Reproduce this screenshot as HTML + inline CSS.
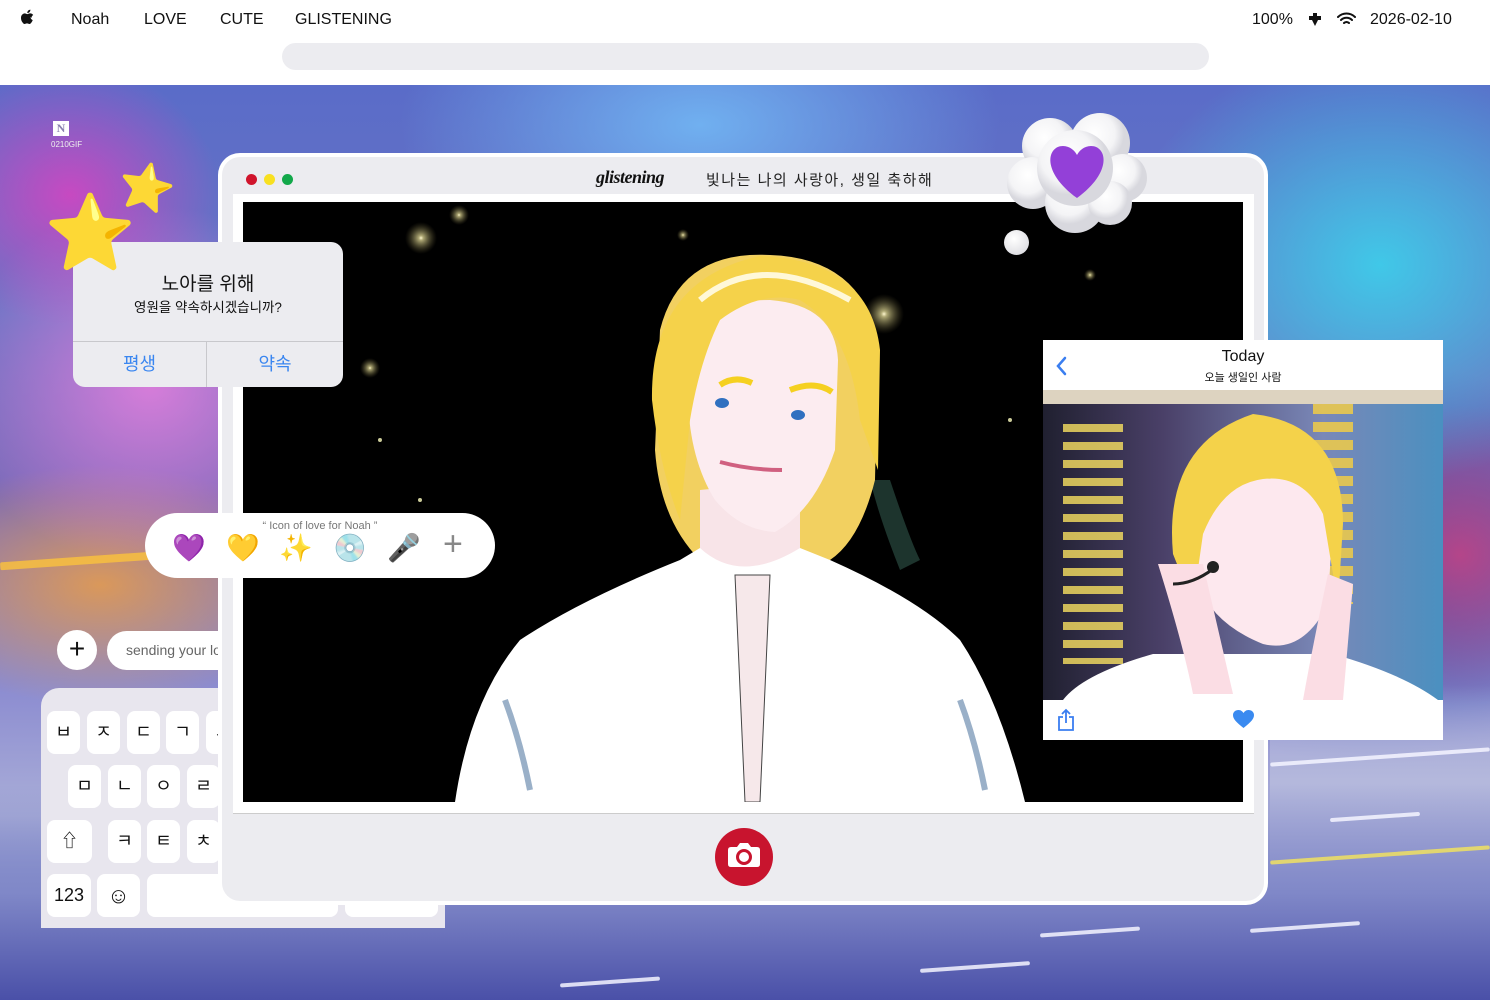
<!DOCTYPE html>
<html><head><meta charset="utf-8">
<style>
*{margin:0;padding:0;box-sizing:border-box}
body{width:1490px;height:1000px;overflow:hidden;position:relative;background:#fff;font-family:"Liberation Sans","Noto Sans CJK KR",sans-serif;color:#111}
.abs{position:absolute}
.menu{top:11px;font-size:16px;color:#111}
#bg{left:0;top:85px;width:1490px;height:915px;overflow:hidden;
background:
radial-gradient(ellipse 150px 130px at 70px 110px,rgba(224,64,192,.8) 0%,rgba(224,64,192,0) 100%),
radial-gradient(ellipse 200px 180px at 150px 300px,rgba(240,128,224,.8) 0%,rgba(240,128,224,0) 100%),
radial-gradient(ellipse 260px 220px at 1380px 180px,#40c8e8 0%,rgba(64,200,232,0) 100%),
radial-gradient(ellipse 300px 160px at 700px 40px,#70b0f0 0%,rgba(112,176,240,0) 100%),
radial-gradient(ellipse 160px 150px at 1460px 470px,rgba(208,64,128,.8) 0%,rgba(208,64,128,0) 100%),
radial-gradient(ellipse 220px 120px at 100px 500px,rgba(240,160,64,.8) 0%,rgba(240,160,64,0) 100%),
radial-gradient(ellipse 300px 200px at 1380px 480px,#3050a8 0%,rgba(48,80,168,0) 100%),
linear-gradient(180deg,#5a6cc8 0%,#6a74c4 25%,#7a6ab8 45%,#8a8ad0 65%,#aaaed8 80%,#6070c0 100%);}
.road{position:absolute;height:4px;background:#f4f4ff;border-radius:2px;transform:rotate(-4deg);opacity:.85}
#win{left:218px;top:153px;width:1050px;height:752px;background:#fff;border-radius:22px;padding:4px}
#wini{width:100%;height:100%;background:#ececf0;border-radius:18px;position:relative}
.dot{position:absolute;top:17px;width:11px;height:11px;border-radius:50%}
#dlg{left:73px;top:242px;width:270px;height:145px;background:#ececf0;border-radius:12px;overflow:hidden}
.key{position:absolute;background:#fff;border-radius:8px;height:43px;font-size:18px;text-align:center;line-height:43px;color:#111}
</style></head><body>

<div class="abs" style="left:20px;top:9px;font-size:18px"><svg width="14" height="17" viewBox="0 0 14 17"><path d="M11.5 9c0-2 1.6-2.9 1.7-3-1-1.4-2.4-1.6-2.9-1.6-1.2-.1-2.4.7-3 .7s-1.6-.7-2.6-.7C3.400 4.500 1 5.600 1 9c0 1.500.5 3 1.300 4.100.6.9 1.300 1.900 2.300 1.900s1.300-.6 2.400-.6 1.400.6 2.400.6 1.700-1 2.300-1.900c.7-1 1-2 1-2.100-.1 0-2.200-.8-2.200-3zM9.600 3c.5-.6.9-1.500.8-2.400-.8 0-1.700.5-2.300 1.100-.5.5-.9 1.400-.8 2.300.9.1 1.800-.4 2.300-1z" fill="#111"/></svg></div>
<div class="abs menu" style="left:71px">Noah</div>
<div class="abs menu" style="left:144px">LOVE</div>
<div class="abs menu" style="left:220px">CUTE</div>
<div class="abs menu" style="left:295px">GLISTENING</div>
<div class="abs menu" style="left:1252px">100%</div>
<div class="abs" style="left:1307px;top:12px"><svg width="16" height="15" viewBox="0 0 16 15"><path d="M6 1h4v3h4v4h-3l-3 6-3-6H2V4h4z" fill="#111"/></svg></div>
<div class="abs" style="left:1337px;top:12px"><svg width="19" height="14" viewBox="0 0 19 14"><path d="M1 5a12 12 0 0 1 17 0M4 8a8 8 0 0 1 11 0M7 11a3.500 3.500 0 0 1 5 0" stroke="#111" stroke-width="2" fill="none" stroke-linecap="round"/></svg></div>
<div class="abs menu" style="left:1370px">2026-02-10</div>
<div class="abs" style="left:282px;top:43px;width:927px;height:27px;background:#ececf0;border-radius:14px"></div>

<div id="bg" class="abs">
  <div class="abs" style="left:1270px;top:600px;width:220px;height:320px;background:linear-gradient(180deg,rgba(180,184,220,0) 0%,#b4b8dc 30%,#a0a4d4 70%,#5060b8 100%)"></div>
  <div class="abs" style="left:0;top:700px;width:1490px;height:215px;background:linear-gradient(180deg,rgba(160,165,215,0) 0%,#8088c8 50%,#4a50a8 100%)"></div>
  <div class="road" style="left:1270px;top:670px;width:220px"></div>
  <div class="road" style="left:1330px;top:730px;width:90px"></div>
  <div class="road" style="left:1270px;top:768px;width:220px;background:#f0e060"></div>
  <div class="road" style="left:1250px;top:840px;width:110px"></div>
  <div class="road" style="left:1040px;top:845px;width:100px"></div>
  <div class="road" style="left:920px;top:880px;width:110px"></div>
  <div class="road" style="left:560px;top:895px;width:100px"></div>
  <div class="road" style="left:0;top:470px;width:210px;background:#f8c040;height:8px"></div>
</div>

<div class="abs" style="left:53px;top:121px;width:16px;height:15px;background:#fff;font:bold 12px 'Liberation Serif',serif;color:#8a80b0;text-align:center;line-height:15px">N</div>
<div class="abs" style="left:51px;top:140px;font-size:8px;color:#eee">0210GIF</div>

<div class="abs" style="left:57px;top:630px;width:40px;height:40px;border-radius:50%;background:#fff;font-size:28px;line-height:38px;text-align:center;font-weight:300">+</div>
<div class="abs" style="left:107px;top:631px;width:200px;height:39px;border-radius:20px;background:#fff;font-size:14px;color:#666;padding:11px 0 0 19px">sending your love</div>
<div class="abs" style="left:41px;top:688px;width:404px;height:240px;background:#e8e6ee;border-radius:18px 0 0 0">
  <div class="key" style="left:6px;top:23px;width:33px">ㅂ</div>
  <div class="key" style="left:46px;top:23px;width:33px">ㅈ</div>
  <div class="key" style="left:86px;top:23px;width:33px">ㄷ</div>
  <div class="key" style="left:125px;top:23px;width:33px">ㄱ</div>
  <div class="key" style="left:165px;top:23px;width:33px">ㅅ</div>
  <div class="key" style="left:27px;top:77px;width:33px">ㅁ</div>
  <div class="key" style="left:67px;top:77px;width:33px">ㄴ</div>
  <div class="key" style="left:106px;top:77px;width:33px">ㅇ</div>
  <div class="key" style="left:146px;top:77px;width:33px">ㄹ</div>
  <div class="key" style="left:6px;top:132px;width:45px">⇧</div>
  <div class="key" style="left:67px;top:132px;width:33px">ㅋ</div>
  <div class="key" style="left:106px;top:132px;width:33px">ㅌ</div>
  <div class="key" style="left:146px;top:132px;width:33px">ㅊ</div>
  <div class="key" style="left:6px;top:186px;width:44px">123</div>
  <div class="key" style="left:56px;top:186px;width:43px;font-size:22px">☺</div>
  <div class="key" style="left:106px;top:186px;width:191px"></div>
  <div class="key" style="left:304px;top:186px;width:93px"></div>
</div>

<div id="win" class="abs"><div id="wini">
  <div class="dot" style="left:24px;background:#d0142c"></div>
  <div class="dot" style="left:42px;background:#f8e020"></div>
  <div class="dot" style="left:60px;background:#12a84a"></div>
  <div class="abs" style="left:374px;top:10px;font:italic bold 18px 'Liberation Serif',serif;letter-spacing:-.5px">glistening</div>
  <div class="abs" style="left:484px;top:12px;font-size:15px;letter-spacing:1.5px;color:#222">빛나는 나의 사랑아, 생일 축하해</div>
  <div class="abs" style="left:11px;top:37px;width:1021px;height:620px;background:#fff;border-bottom:1px solid #ccc"></div>
  <div class="abs" style="left:21px;top:45px;width:1000px;height:600px;background:#000;overflow:hidden">
    <svg width="1000" height="600" viewBox="243 202 1000 600" style="position:absolute;left:0;top:0">
      <defs><radialGradient id="glow"><stop offset="0" stop-color="#fff8d0"/><stop offset=".15" stop-color="#d8d090" stop-opacity=".8"/><stop offset="1" stop-color="#605830" stop-opacity="0"/></radialGradient></defs>
      <circle cx="421" cy="238" r="16" fill="url(#glow)"/><circle cx="459" cy="215" r="10" fill="url(#glow)"/>
      <circle cx="884" cy="314" r="20" fill="url(#glow)"/><circle cx="370" cy="368" r="10" fill="url(#glow)"/>
      <circle cx="683" cy="235" r="6" fill="url(#glow)"/><circle cx="1090" cy="275" r="6" fill="url(#glow)"/>
      <circle cx="380" cy="440" r="2" fill="#cc9"/><circle cx="1010" cy="420" r="2" fill="#cc9"/><circle cx="420" cy="500" r="2" fill="#cc9"/>
      <path d="M890 480 Q910 540 920 560 L900 570 Q880 520 870 480Z" fill="#2a4a40" opacity=".7"/>
      <path d="M660 330 Q680 250 770 255 Q860 258 878 340 L875 480 Q860 540 830 560 L700 560 Q660 520 655 450Z" fill="#f2d060"/>
      <path d="M455 802 Q470 700 520 640 Q580 600 680 560 L700 548 L800 548 L830 560 Q920 600 960 640 Q1000 700 1025 802Z" fill="#fff"/>
      <path d="M505 700 Q520 740 530 790" stroke="#9ab0c8" stroke-width="6" fill="none"/>
      <path d="M960 700 Q975 740 985 790" stroke="#9ab0c8" stroke-width="6" fill="none"/>
      <path d="M735 575 L745 802 L760 802 L770 575Z" fill="#f6e8ea" stroke="#444" stroke-width="1"/>
      <path d="M700 490 L700 548 Q740 585 800 548 L800 480Z" fill="#f8e4e8"/>
      <path d="M688 330 Q700 300 770 300 Q835 305 838 360 L835 450 Q815 510 775 532 Q740 530 715 500 Q690 460 688 400Z" fill="#fcecf0"/>
      <path d="M652 400 Q650 280 760 256 Q870 260 880 350 L878 470 L860 420 Q850 330 800 300 Q760 290 720 320 Q700 360 690 420 L680 520 Q660 470 652 400Z" fill="#f5d24a"/>
      <path d="M700 300 Q760 250 850 300" stroke="#fff8d8" stroke-width="6" fill="none"/>
      <path d="M720 385 Q735 375 752 383" stroke="#f5d020" stroke-width="6" fill="none"/>
      <path d="M790 390 Q815 380 832 392" stroke="#f5d020" stroke-width="6" fill="none"/>
      <ellipse cx="722" cy="403" rx="7" ry="5" fill="#3070c0"/><ellipse cx="798" cy="415" rx="7" ry="5" fill="#3070c0"/>
      <path d="M720 462 Q750 470 782 470" stroke="#d06080" stroke-width="4" fill="none"/>
    </svg>
  </div>
  <div class="abs" style="left:493px;top:671px;width:58px;height:58px;border-radius:50%;background:#c8142e">
    <svg width="58" height="58" viewBox="0 0 58 58"><path d="M13 22q0-3 3-3h6l3-4h8l3 4h6q3 0 3 3v14q0 3-3 3H16q-3 0-3-3z" fill="#fff"/><circle cx="29" cy="29" r="6.500" fill="none" stroke="#c8142e" stroke-width="3"/></svg>
  </div>
</div></div>

<div class="abs" style="left:1005px;top:108px;width:142px;height:127px">
  <svg width="142" height="127" viewBox="0 0 142 127"><defs><radialGradient id="cl" cx=".4" cy=".35"><stop offset="0" stop-color="#fff"/><stop offset=".7" stop-color="#f4f4f6"/><stop offset="1" stop-color="#d8d8de"/></radialGradient></defs>
  <g fill="url(#cl)"><circle cx="45" cy="38" r="28"/><circle cx="95" cy="35" r="30"/><circle cx="118" cy="70" r="24"/><circle cx="28" cy="75" r="26"/><circle cx="70" cy="95" r="30"/><circle cx="105" cy="95" r="22"/><circle cx="70" cy="60" r="38"/></g>
  <path d="M72 90 C36 64 42 38 58 38 C65 38 70 43 72 47 C74 43 79 38 86 38 C102 38 108 64 72 90Z" fill="#9340d8"/></svg>
</div>
<div class="abs" style="left:1004px;top:230px;width:25px;height:25px;border-radius:50%;background:radial-gradient(circle at 40% 35%,#fff,#d4d4da)"></div>

<div class="abs" style="left:1043px;top:340px;width:400px;height:400px;background:#fff;overflow:hidden">
  <svg class="abs" style="left:12px;top:15px" width="14" height="22" viewBox="0 0 14 22"><path d="M10 3 3 11l7 8" stroke="#3a7ef0" stroke-width="2.500" fill="none" stroke-linecap="round"/></svg>
  <div class="abs" style="left:0;width:400px;top:8px;text-align:center;font-size:16px">Today</div>
  <div class="abs" style="left:0;width:400px;top:29px;text-align:center;font-size:11px">오늘 생일인 사람</div>
  <div class="abs" style="left:0;top:50px;width:400px;height:14px;background:#ddd3c0"></div>
  <div class="abs" style="left:0;top:64px;width:400px;height:296px;background:linear-gradient(90deg,#202030 0%,#4a4068 30%,#7a88b8 70%,#4a90c0 100%);overflow:hidden">
    <div class="abs" style="left:20px;top:20px;width:60px;height:240px;background:repeating-linear-gradient(180deg,#f8e060 0 8px,transparent 8px 18px);opacity:.8"></div>
    <div class="abs" style="left:270px;top:0px;width:40px;height:200px;background:repeating-linear-gradient(180deg,#f8d040 0 10px,transparent 10px 18px);opacity:.8"></div>
    <svg width="400" height="296" viewBox="0 0 400 296" class="abs" style="left:0;top:0">
      <path d="M20 296 Q40 270 110 250 L290 250 Q360 270 395 296Z" fill="#fff"/>
      <path d="M150 120 Q150 40 210 30 Q280 30 290 110 L285 200 Q260 250 220 240 Q170 220 155 180Z" fill="#fde8ee"/>
      <path d="M130 150 Q120 40 210 10 Q300 20 300 120 L295 200 L280 110 Q260 70 220 75 Q180 80 160 130 L150 200Z" fill="#f4d24a"/>
      <path d="M115 160 Q140 240 150 290 L190 290 L160 160Z" fill="#fbdde4"/>
      <path d="M285 170 Q270 240 260 296 L300 296 L310 180Z" fill="#fbdde4"/>
      <path d="M130 180 Q150 180 170 165" stroke="#222" stroke-width="3" fill="none"/><circle cx="170" cy="163" r="6" fill="#222"/>
    </svg>
  </div>
  <svg class="abs" style="left:14px;top:368px" width="18" height="24" viewBox="0 0 18 24"><path d="M6 9H2v13h14V9h-4M9 15V2M5 6l4-4 4 4" stroke="#3a7ef0" stroke-width="1.800" fill="none"/></svg>
  <svg class="abs" style="left:190px;top:370px" width="21" height="18" viewBox="0 0 21 18"><path d="M10.500 18C3 12 0 9 0 5 0 2 2.500 0 5.500 0 8 0 9.500 1.500 10.500 3 11.500 1.500 13 0 15.500 0 18.500 0 21 2 21 5c0 4-3 7-10.500 13z" fill="#3a8af0"/></svg>
</div>

<div id="dlg" class="abs">
  <div class="abs" style="left:0;width:270px;top:27px;text-align:center;font-size:19px">노아를 위해</div>
  <div class="abs" style="left:0;width:270px;top:54px;text-align:center;font-size:13.5px">영원을 약속하시겠습니까?</div>
  <div class="abs" style="left:0;top:99px;width:270px;height:1px;background:#c8c8cc"></div>
  <div class="abs" style="left:133px;top:99px;width:1px;height:46px;background:#c8c8cc"></div>
  <div class="abs" style="left:0;width:133px;top:108px;text-align:center;font-size:18px;color:#3a86f0">평생</div>
  <div class="abs" style="left:134px;width:136px;top:108px;text-align:center;font-size:18px;color:#3a86f0">약속</div>
</div>
<div class="abs" style="left:118px;top:164px;font-size:46px;line-height:1;transform:rotate(12deg)">⭐</div>
<div class="abs" style="left:44px;top:196px;font-size:74px;line-height:1">⭐</div>

<div class="abs" style="left:145px;top:513px;width:350px;height:65px;background:#fff;border-radius:33px">
  <div class="abs" style="left:0;width:350px;top:7px;text-align:center;font-size:11px;color:#777">“ Icon of love for Noah ”</div>
  <div class="abs" style="left:27px;top:22px;font-size:27px;line-height:1">💜</div>
  <div class="abs" style="left:81px;top:22px;font-size:27px;line-height:1">💛</div>
  <div class="abs" style="left:134px;top:22px;font-size:27px;line-height:1">✨</div>
  <div class="abs" style="left:188px;top:22px;font-size:27px;line-height:1">💿</div>
  <div class="abs" style="left:242px;top:22px;font-size:27px;line-height:1">🎤</div>
  <div class="abs" style="left:298px;top:14px;font-size:34px;line-height:1;color:#888">+</div>
</div>

</body></html>
